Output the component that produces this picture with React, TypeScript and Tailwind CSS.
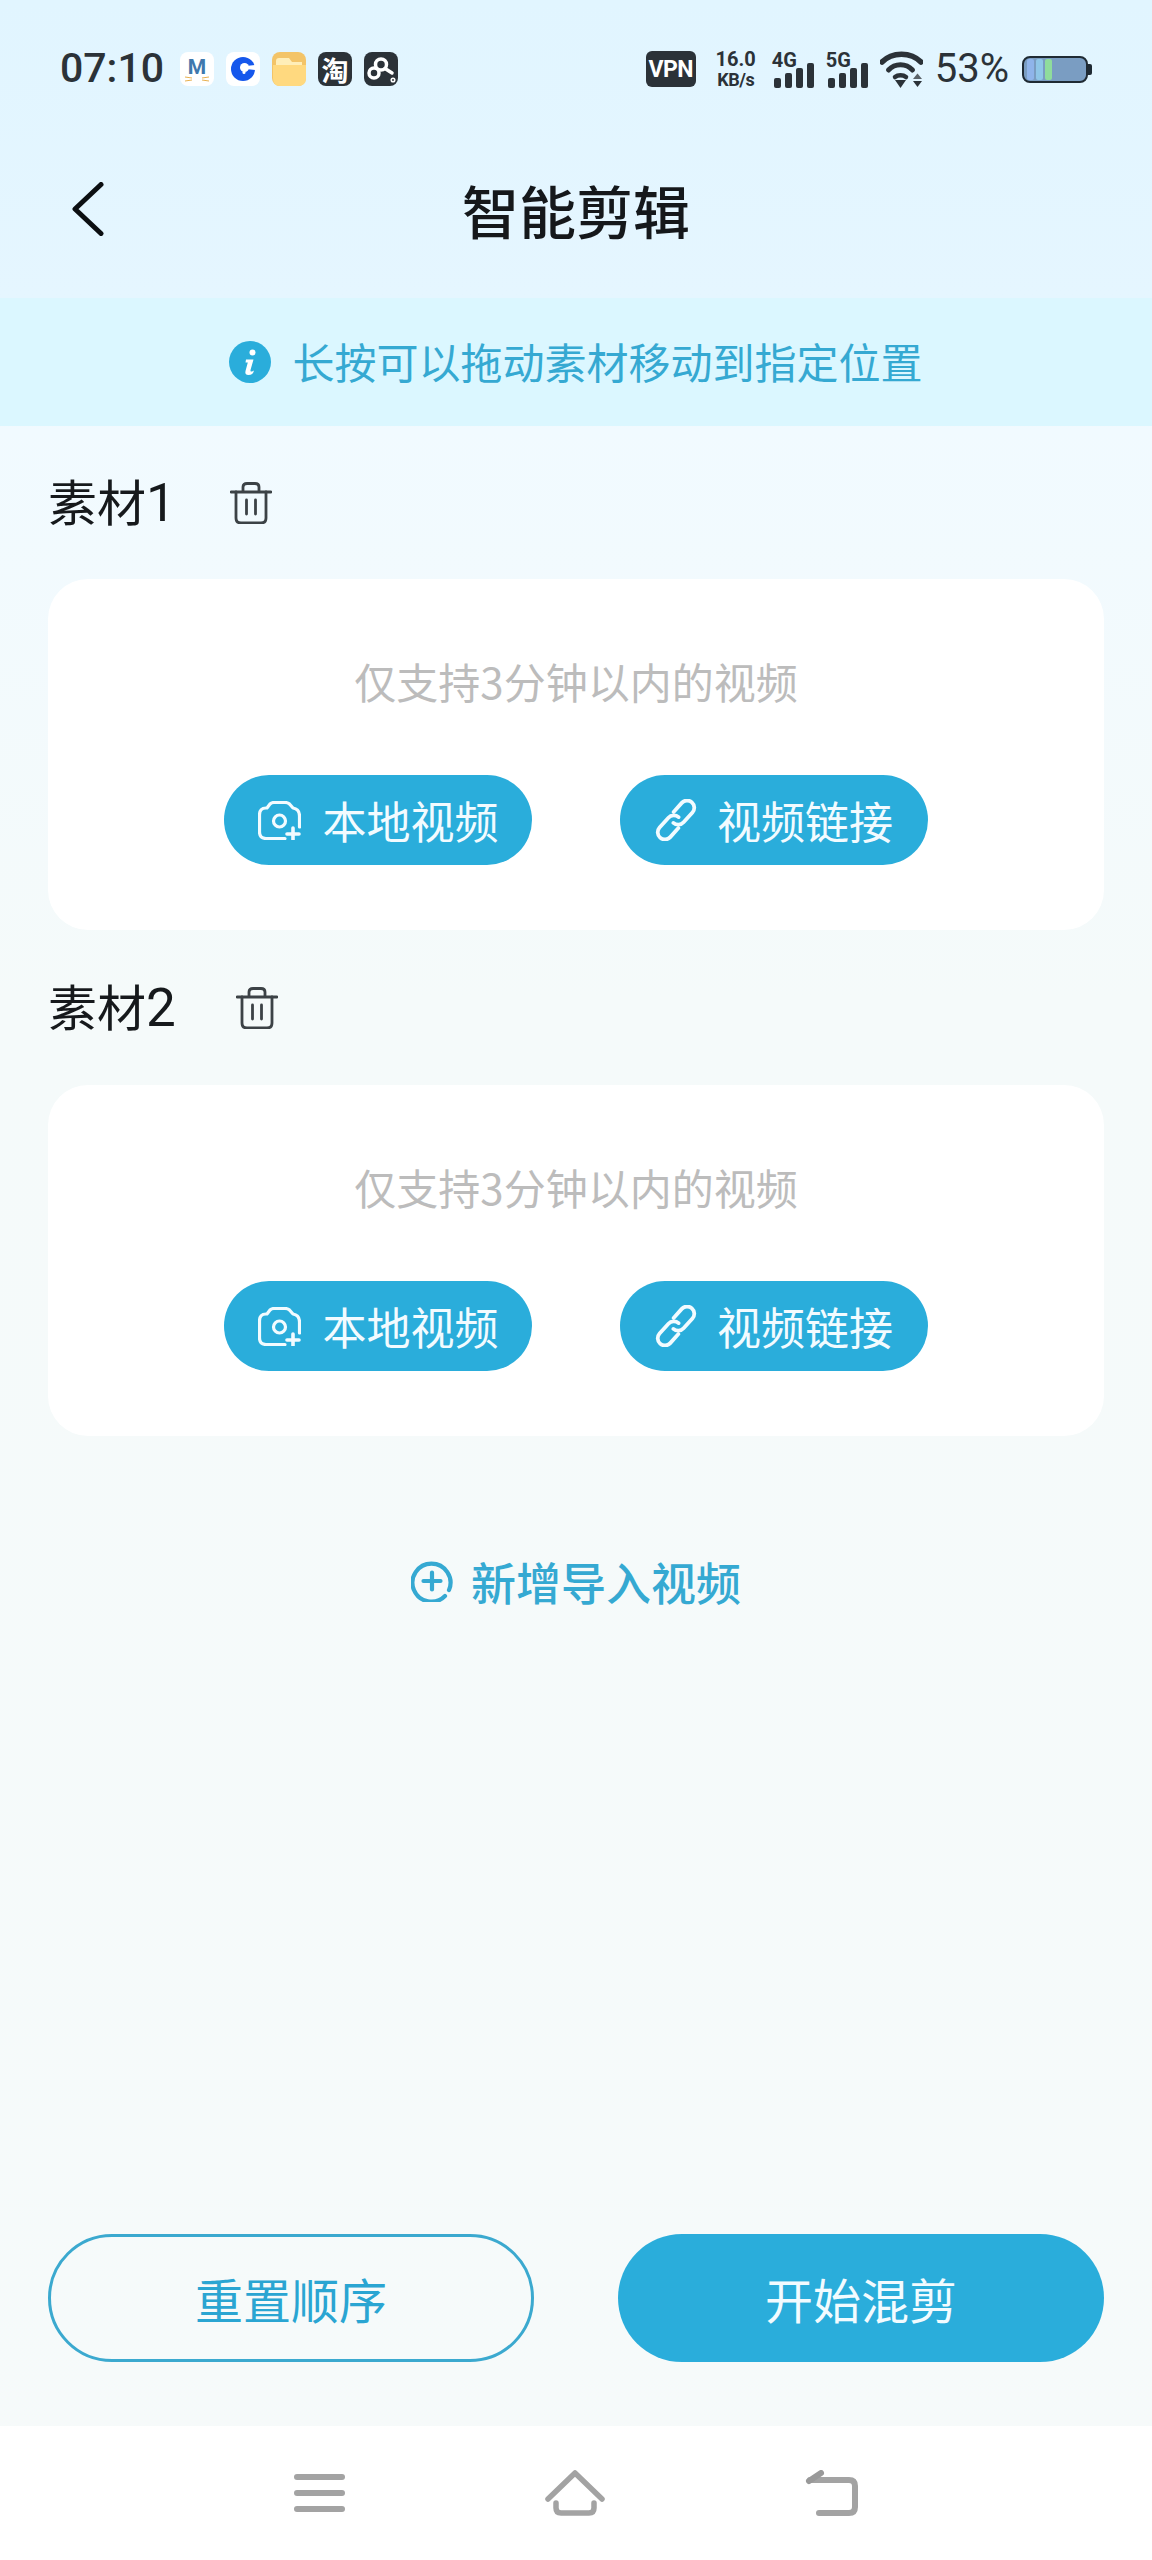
const Trash = () => (
  <svg viewBox="0 0 42 42" className="w-[42px] h-[42px]" fill="none" stroke="#3c4246" strokeWidth="2.800" strokeLinecap="round" strokeLinejoin="round">
    <path d="M1 10H41" />
    <path d="M13 9V5Q13 1.500 17 1.500H25Q29 1.500 29 5V9" />
    <path d="M6 10V36Q6 41 11 41H31Q36 41 36 36V10" />
    <path d="M16.500 18V32M25.500 18V32" />
  </svg>
);

const CameraPlus = () => (
  <svg viewBox="0 0 43 39" className="w-[43px] h-[39px]" fill="none" stroke="#f2fbff" strokeWidth="3.200" strokeLinecap="round" strokeLinejoin="round">
    <path d="M27 37.500H8Q1.500 37.500 1.500 31V14Q1.500 7 8 7H9L12 3Q13.500 1.500 16 1.500H27Q30 1.500 31.500 3L35 7Q41.500 8 41.500 15V26" />
    <circle cx="21.500" cy="20" r="6" />
    <path d="M35 27V39M29 33H41" strokeWidth="3.600" />
  </svg>
);

const ChainLink = () => (
  <svg viewBox="2 2 38 38" className="w-[42px] h-[42px]" fill="none" stroke="#f2fbff" strokeWidth="3.400" strokeLinecap="round">
    <g transform="rotate(42 21 21)">
      <path d="M14.500 17V6A6.500 6.500 0 0 1 27.500 6V18A6.500 6.500 0 0 1 21 24.500" />
      <path d="M27.500 25V36A6.500 6.500 0 0 1 14.500 36V24A6.500 6.500 0 0 1 21 17.500" />
    </g>
  </svg>
);

const MediaCard = () => (
  <div className="bg-white rounded-[40px] h-[351px] flex flex-col items-center pt-[72px]">
    <div className="h-[60px] leading-[60px] text-[42px] text-[#bcbcbc]">仅支持3分钟以内的视频</div>
    <div className="mt-[64px] flex gap-[88px]">
      <button className="w-[308px] h-[90px] rounded-full bg-[#2aaddb] flex items-center justify-center gap-[22px] text-[44px] text-[#f2fbff]">
        <CameraPlus />
        <span>本地视频</span>
      </button>
      <button className="w-[308px] h-[90px] rounded-full bg-[#2aaddb] flex items-center justify-center gap-[20px] text-[44px] text-[#f2fbff]">
        <ChainLink />
        <span>视频链接</span>
      </button>
    </div>
  </div>
);

const Signal = ({ label }: { label: string }) => (
  <div className="relative w-[43px] h-[37px]">
    <span className="absolute left-0 top-[-1px] text-[20px] leading-[20px] font-bold text-[#2b3238] font-['Roboto']">{label}</span>
    <div className="absolute inset-0 pl-[2px] flex items-end gap-[4px]">
      <div className="w-[7px] h-[10px] rounded-[2px] bg-[#2b3238]" />
      <div className="w-[7px] h-[15px] rounded-[2px] bg-[#2b3238]" />
      <div className="w-[7px] h-[20px] rounded-[2px] bg-[#2b3238]" />
      <div className="w-[7px] h-[25px] rounded-[2px] bg-[#2b3238]" />
    </div>
  </div>
);

export default function App() {
  return (
    <div className="w-[1152px] h-[2560px] flex flex-col font-['Noto_Sans_CJK_SC',sans-serif] bg-[linear-gradient(180deg,#e1f5ff_0px,#e5f6ff_298px,#f1faff_430px,#f5fafa_1000px,#f6fafa_2560px)]">
      {/* Status bar */}
      <div className="h-[136px] pt-[2px] px-[60px] flex items-center justify-between">
        <div className="flex items-center">
          <span className="text-[41px] font-medium text-[#2b3238] font-['Roboto'] w-[120px]">07:10</span>
          <div className="flex gap-[12px]">
            <div className="relative w-[34px] h-[34px] rounded-[8px] bg-white flex justify-center pt-[5px] text-[21px] font-bold leading-none text-[#3f78ad] font-['Roboto']">
              M
              <svg viewBox="0 0 26 6" className="absolute left-[4px] bottom-[4px] w-[26px] h-[6px]" stroke="#e8b04f" strokeWidth="1">
                <path d="M1 1L8 2M1 5L8 4M25 1L18 2M25 5L18 4" />
              </svg>
            </div>
            <div className="w-[34px] h-[34px] rounded-[8px] bg-white flex items-center justify-center">
              <svg viewBox="0 0 24 24" className="w-[24px] h-[24px]">
                <circle cx="12" cy="12" r="12" fill="#1557ec" />
                <circle cx="13.500" cy="10.500" r="4.500" fill="#fff" />
                <path d="M15 9L24 8V13L15 12Z" fill="#fff" />
                <circle cx="13" cy="15.500" r="1.500" fill="#fff" />
              </svg>
            </div>
            <svg viewBox="0 0 34 34" className="w-[34px] h-[34px]">
              <rect width="34" height="34" rx="8" fill="#f3c468" />
              <path d="M4 9Q4 6 7 6H17L20 10H30V31H4Z" fill="#ffeeb8" />
              <path d="M1 13H34V26Q34 34 26 34H8Q1 34 1 26Z" fill="#ffd97f" />
            </svg>
            <div className="w-[34px] h-[34px] rounded-[8px] bg-[#2b3238] flex items-center justify-center text-[27px] leading-none font-bold text-white">淘</div>
            <div className="w-[34px] h-[34px] rounded-[8px] bg-[#2b3238] flex items-center justify-center">
              <svg viewBox="0 0 34 34" className="w-[34px] h-[34px]" fill="none" stroke="#fff" strokeWidth="3.500" strokeLinecap="round">
                <circle cx="17" cy="12.500" r="5.500" />
                <circle cx="10" cy="21" r="5" />
                <path d="M21 16.500L28 21" />
                <circle cx="29" cy="28" r="0.800" />
              </svg>
            </div>
          </div>
        </div>
        <div className="flex items-center">
          <div className="w-[50px] h-[36px] rounded-[6px] bg-[#2b3238] flex items-center justify-center text-[23px] font-bold text-white font-['Roboto'] leading-none tracking-[-0.5px]">VPN</div>
          <div className="ml-[19px] w-[42px] flex flex-col items-center font-['Roboto'] font-bold text-[#2b3238]">
            <span className="text-[20px] leading-[21px]">16.0</span>
            <span className="text-[18px] leading-[19px] tracking-[-0.5px]">KB/s</span>
          </div>
          <div className="ml-[15px]"><Signal label="4G" /></div>
          <div className="ml-[11px]"><Signal label="5G" /></div>
          <svg viewBox="0 0 43 37" className="ml-[11px] w-[43px] h-[37px]" fill="none">
            <path d="M2 11C12 0.500 31 0.500 41 11" stroke="#2b3238" strokeWidth="5.500" strokeLinecap="round" />
            <path d="M8.500 19C15 12 26 12 32.500 19" stroke="#2b3238" strokeWidth="5" strokeLinecap="round" />
            <path d="M15 26C18 23.500 23 23.500 26 26" stroke="#2b3238" strokeWidth="4.500" strokeLinecap="round" />
            <path d="M15 29H26L20.500 37Z" fill="#2b3238" />
            <path d="M33 28L37.500 22.500L42 28Z" fill="#5b6368" />
            <path d="M33 30L37.500 36L42 30Z" fill="#2b3238" />
          </svg>
          <span className="ml-[12px] text-[40px] leading-none text-[#2b3238] font-['Roboto']">53%</span>
          <div className="ml-[13px] flex items-center">
            <div className="w-[66px] h-[27px] rounded-[8px] border-[2px] border-[#1f2a33] bg-[#7a9dc2] flex items-stretch gap-[2px] pl-[3px] py-[1px] overflow-hidden">
              <div className="w-[7px] rounded-[2px] bg-[#8fb4ea]" />
              <div className="w-[7px] rounded-[2px] bg-[#8fc6e8]" />
              <div className="w-[7px] rounded-[2px] bg-[#8fdc9c]" />
            </div>
            <div className="w-[4px] h-[11px] rounded-r-[2px] bg-[#1f2a33]" />
          </div>
        </div>
      </div>

      {/* Header */}
      <div className="h-[162px] pb-[16px] px-[72px] grid grid-cols-[1fr_auto_1fr] items-center">
        <svg viewBox="0 0 32 54" className="w-[32px] h-[54px]" fill="none" stroke="#0c0f12" strokeWidth="5" strokeLinecap="round" strokeLinejoin="round">
          <path d="M29 2.500L3 27L29 51.500" />
        </svg>
        <h1 className="text-[57px] leading-none font-medium text-[#15181b]">智能剪辑</h1>
        <div />
      </div>

      {/* Tip */}
      <div className="h-[128px] bg-[#dbf7ff] flex items-center justify-center gap-[21px]">
        <svg viewBox="0 0 42 42" className="w-[42px] h-[42px]">
          <circle cx="21" cy="21" r="21" fill="#2aaddb" />
          <circle cx="23.500" cy="11.500" r="3" fill="#fff" />
          <path d="M17 18.500H24.500L21.500 29Q21 31 23 30.500L25 29.500Q24 34 19.500 34Q15.500 34 16.500 30L18.800 21.500H16.500Z" fill="#fff" />
        </svg>
        <span className="-mt-[2px] text-[42px] leading-none text-[#35a9d2]">长按可以拖动素材移动到指定位置</span>
      </div>

      {/* Materials */}
      <div className="px-[48px]">
        <div className="h-[153px] flex items-center">
          <span className="w-[182px] text-[49px] leading-none text-[#16191c]">
            素材<span className="text-[53px] font-['Roboto']">1</span>
          </span>
          <Trash />
        </div>
        <MediaCard />
        <div className="h-[155px] flex items-center">
          <span className="w-[188px] text-[49px] leading-none text-[#16191c]">
            素材<span className="text-[53px] font-['Roboto']">2</span>
          </span>
          <Trash />
        </div>
        <MediaCard />
      </div>

      {/* Add */}
      <div className="mt-[114px] h-[62px] flex items-center justify-center gap-[18px]">
        <svg viewBox="0 0 42 42" className="w-[42px] h-[42px]" fill="none" stroke="#35a9d2" strokeWidth="4.200" strokeLinecap="round">
          <path d="M34 36A19 19 0 1 1 38 30" />
          <path d="M21 12.500V29.500M12.500 21H29.500" />
        </svg>
        <span className="text-[45px] leading-none font-medium text-[#35a9d2]">新增导入视频</span>
      </div>

      {/* Actions */}
      <div className="mt-auto mb-[64px] px-[48px] flex gap-[84px]">
        <button className="w-[486px] h-[128px] rounded-full border-[3.500px] border-[#3ba9cf] text-[48px] text-[#2aa5d2]">重置顺序</button>
        <button className="w-[486px] h-[128px] rounded-full bg-[#2aaddb] text-[48px] text-[#f2fbff]">开始混剪</button>
      </div>

      {/* Navigation bar */}
      <div className="h-[134px] bg-white flex items-center justify-center gap-[200px]">
        <div className="w-[51px] flex flex-col gap-[10px]">
          <div className="h-[6px] rounded-full bg-[#a3a3a3]" />
          <div className="h-[6px] rounded-full bg-[#a3a3a3]" />
          <div className="h-[6px] rounded-full bg-[#a3a3a3]" />
        </div>
        <svg viewBox="0 0 60 46" className="w-[60px] h-[46px]" fill="none" stroke="#a3a3a3" strokeWidth="5.500" strokeLinecap="round" strokeLinejoin="round">
          <path d="M3 29L30 3L57 29" />
          <path d="M11 33V38Q11 43 16 43H44Q49 43 49 38V33" />
        </svg>
        <svg viewBox="0 0 53 46" className="w-[53px] h-[46px]" fill="none" stroke="#a3a3a3" strokeWidth="6" strokeLinecap="round" strokeLinejoin="round">
          <path d="M14 43H44Q50 43 50 37V16Q50 10 44 10H5" />
          <path d="M4 11L16 3" stroke="#999999" />
        </svg>
      </div>
    </div>
  );
}
